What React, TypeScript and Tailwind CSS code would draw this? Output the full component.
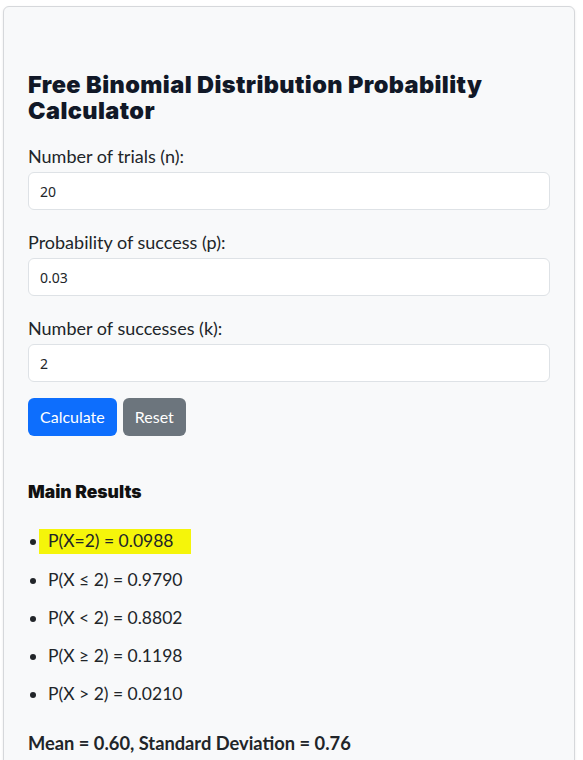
import { useState } from "react";

const fields = [
  { label: "Number of trials (n):", value: "20" },
  { label: "Probability of success (p):", value: "0.03" },
  { label: "Number of successes (k):", value: "2" },
];

const results = [
  "P(X ≤ 2) = 0.9790",
  "P(X < 2) = 0.8802",
  "P(X ≥ 2) = 0.1198",
  "P(X > 2) = 0.0210",
];

export default function App() {
  const [values, setValues] = useState(fields.map((f) => f.value));

  return (
    <div className="min-h-screen bg-white px-[3px] pt-[6px] font-['Lato',sans-serif] text-[#212529]">
      <div className="w-[572px] rounded-[6px] border border-[#d6d8db] bg-[#f8f9fa] px-[24px] pb-6 pt-[65px] shadow-[0_1px_3px_rgba(0,0,0,0.08)]">
        <h1 className="mb-[20px] max-w-[490px] font-['Inter',sans-serif] text-[23.5px] font-black leading-[26px] tracking-[0.4px] text-[#111827]">
          Free Binomial Distribution Probability Calculator
        </h1>

        {fields.map((f, i) => (
          <div key={f.label} className={i === 2 ? "mb-[16px]" : "mb-[20px]"}>
            <label className="mb-[4px] block text-[18px] leading-[24px]">{f.label}</label>
            <input
              type="text"
              value={values[i]}
              onChange={(e) => {
                const next = [...values];
                next[i] = e.target.value;
                setValues(next);
              }}
              className="h-[38px] w-[522px] rounded-[6px] border border-[#dee2e6] bg-white px-[11px] font-['Noto_Sans',sans-serif] text-[14px] text-[#212529] outline-none"
            />
          </div>
        ))}

        <div className="flex gap-[6px]">
          <button className="h-[38px] rounded-[6px] bg-[#0d6efd] px-[12px] text-[16px] text-white">
            Calculate
          </button>
          <button className="h-[38px] rounded-[6px] bg-[#6c757d] px-[12px] text-[16px] text-white">
            Reset
          </button>
        </div>

        <h3 className="mt-[44px] font-['Inter',sans-serif] text-[17.5px] font-black leading-[24px] text-[#111]">
          Main Results
        </h3>

        <ul className="mt-[25px] list-disc pl-[20px] text-[17.5px] leading-[24px]">
          <li className="mb-[14px]">
            <span className="-ml-[9px] inline-block h-[25px] bg-[#f5f50a] pl-[9px] pr-[17px]">
              P(X=2) = 0.0988
            </span>
          </li>
          {results.map((r) => (
            <li key={r} className="mb-[14px]">
              {r}
            </li>
          ))}
        </ul>

        <p className="mt-[25px] text-[18.3px] font-bold leading-[24px]">
          Mean = 0.60, Standard Deviation = 0.76
        </p>
      </div>
    </div>
  );
}
